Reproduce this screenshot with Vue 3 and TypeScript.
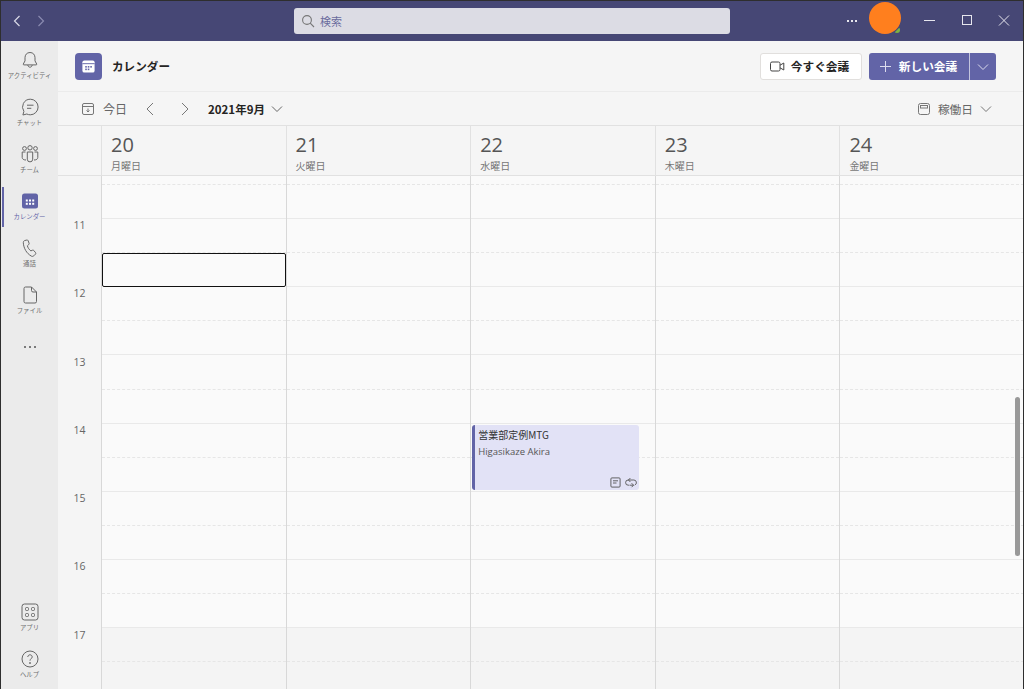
<script setup lang="ts">
const days = [
  { n: 20, w: '月曜日' },
  { n: 21, w: '火曜日' },
  { n: 22, w: '水曜日' },
  { n: 23, w: '木曜日' },
  { n: 24, w: '金曜日' },
]
const hours = [11, 12, 13, 14, 15, 16, 17]
// half-hour slots: index 0 is the clipped remainder above the 11:00 line
const slots = Array.from({ length: 16 }, (_, i) => i)
</script>

<template>
  <div class="app">
    <header class="topbar">
      <div class="nav">
        <svg width="12" height="14" viewBox="0 0 12 14" fill="none" stroke="#d8d8e6" stroke-width="1.2"><path d="M8.5 2 3.5 7l5 5" /></svg>
        <svg width="12" height="14" viewBox="0 0 12 14" fill="none" stroke="#8b8bb0" stroke-width="1.2"><path d="M3.5 2l5 5-5 5" /></svg>
      </div>
      <div class="search">
        <svg width="14" height="14" viewBox="0 0 14 14" fill="none" stroke="#777" stroke-width="1.1"><circle cx="6" cy="6" r="4.4" /><path d="M9.2 9.2 13 13" /></svg>
        <span>検索</span>
      </div>
      <div class="top-right">
        <span class="dots"><i></i><i></i><i></i></span>
        <div class="avatar"><b></b></div>
        <div class="win">
          <svg width="12" height="12" viewBox="0 0 12 12" fill="none" stroke="#e6e6ee" stroke-width="1"><path d="M0 5.500h11" /></svg>
          <svg width="12" height="12" viewBox="0 0 12 12" fill="none" stroke="#e6e6ee" stroke-width="1"><rect x="1.500" y=".5" width="9" height="9" /></svg>
          <svg width="12" height="12" viewBox="0 0 12 12" fill="none" stroke="#e6e6ee" stroke-width="1"><path d="M1 .5l10 10M11 .5 1 10.500" /></svg>
        </div>
      </div>
    </header>

    <div class="body">
      <nav class="rail">
        <div class="rail-group">
          <div class="rail-item">
            <svg width="20" height="20" viewBox="0 0 20 20" fill="none" stroke="#666" stroke-width="1"><path d="M10 2.500c-3.300 0-5 2.500-5 5.200v3.200L3.300 14c-.2.500 0 .9.600.9h12.200c.6 0 .8-.4.6-.9L15 10.900V7.700c0-2.700-1.700-5.200-5-5.200Z" /><path d="M7.800 15c.2 1.400 1.100 2.200 2.200 2.200s2-.8 2.200-2.200" /></svg>
            <span>アクティビティ</span>
          </div>
          <div class="rail-item">
            <svg width="20" height="20" viewBox="0 0 20 20" fill="none" stroke="#666" stroke-width="1"><path d="M10.300 2.200a7.800 7.800 0 0 1 0 15.600c-1.300 0-2.500-.3-3.500-.8l-3.900 1 1-3.600a7.800 7.800 0 0 1 6.400-12.200Z" /><path d="M7 8.200h6.500M7 11.300h4.300" /></svg>
            <span>チャット</span>
          </div>
          <div class="rail-item">
            <svg width="20" height="20" viewBox="0 0 20 20" fill="none" stroke="#666" stroke-width="1"><circle cx="4.500" cy="4.500" r="1.900" /><circle cx="10" cy="3.800" r="2.200" /><circle cx="15.500" cy="4.500" r="1.900" /><path d="M7.300 8h5.400v7.200a2.700 2.700 0 0 1-5.400 0Z" /><path d="M5.500 8H2.200v5.400c0 1.500 1.200 2.600 3.800 2.600M14.500 8h3.300v5.400c0 1.500-1.200 2.600-3.800 2.600" /></svg>
            <span>チーム</span>
          </div>
          <div class="rail-item active">
            <svg width="20" height="20" viewBox="0 0 20 20"><rect x="2" y="2.500" width="16" height="15" rx="2.500" fill="#6264a7" /><g fill="#fff"><rect x="5.800" y="8.500" width="2" height="2" /><rect x="9" y="8.500" width="2" height="2" /><rect x="12.200" y="8.500" width="2" height="2" /><rect x="5.800" y="11.800" width="2" height="2" /><rect x="9" y="11.800" width="2" height="2" /><rect x="12.200" y="11.800" width="2" height="2" /></g></svg>
            <span>カレンダー</span>
          </div>
          <div class="rail-item">
            <svg width="20" height="20" viewBox="0 0 20 20" fill="none" stroke="#666" stroke-width="1"><path d="M4.500 2.600 6.900 2c.5-.1 1 .1 1.200.6l1 2.700c.2.500 0 1-.4 1.300L7.400 7.800c.5 2 1.700 3.800 3.500 5.100l1.600-.7c.5-.2 1-.1 1.300.3l1.800 2.200c.3.400.3 1-.1 1.400l-1.700 1.700c-.7.700-1.700.8-2.500.3C6.600 15.300 3.700 10.500 3.300 4.700c0-1 .4-1.800 1.200-2.100Z" /></svg>
            <span>通話</span>
          </div>
          <div class="rail-item">
            <svg width="20" height="20" viewBox="0 0 20 20" fill="none" stroke="#666" stroke-width="1"><path d="M5.500 2h6l5 5v9.500a1.500 1.500 0 0 1-1.500 1.500H5.500A1.500 1.500 0 0 1 4 16.500v-13A1.500 1.500 0 0 1 5.500 2Z" /><path d="M11.500 2v3.500A1.500 1.500 0 0 0 13 7h3.500" /></svg>
            <span>ファイル</span>
          </div>
          <div class="rail-more"><i></i><i></i><i></i></div>
        </div>
        <div class="rail-group bottom">
          <div class="rail-item">
            <svg width="20" height="20" viewBox="0 0 20 20" fill="none" stroke="#666" stroke-width="1"><rect x="2" y="2" width="16" height="16" rx="2.500" /><rect x="5.500" y="5.500" width="3" height="3" rx="1" /><rect x="11.500" y="5.500" width="3" height="3" rx="1" /><rect x="5.500" y="11.500" width="3" height="3" rx="1" /><rect x="11.500" y="11.500" width="3" height="3" rx="1" /></svg>
            <span>アプリ</span>
          </div>
          <div class="rail-item">
            <svg width="20" height="20" viewBox="0 0 20 20" fill="none" stroke="#666" stroke-width="1"><circle cx="10" cy="10" r="8" /><path d="M7.800 8c0-1.300 1-2.200 2.200-2.200s2.200.9 2.200 2.100c0 1.800-2.200 1.800-2.200 3.800" /><circle cx="10" cy="14" r=".5" fill="#666" /></svg>
            <span>ヘルプ</span>
          </div>
        </div>
      </nav>

      <main class="main">
        <section class="head">
          <div class="app-icon">
            <svg width="15" height="15" viewBox="0 0 16 16"><rect x="1.500" y="1.500" width="13" height="13" rx="2" fill="#fff" /><rect x="1.500" y="4.500" width="13" height="1" fill="#6264a7" /><g fill="#6264a7"><rect x="4.500" y="7.500" width="1.700" height="1.700" /><rect x="7.200" y="7.500" width="1.700" height="1.700" /><rect x="9.900" y="7.500" width="1.700" height="1.700" /><rect x="4.500" y="10.200" width="1.700" height="1.700" /><rect x="7.200" y="10.200" width="1.700" height="1.700" /></g></svg>
          </div>
          <h1>カレンダー</h1>
          <div class="head-actions">
            <button class="btn-now">
              <svg width="15" height="13" viewBox="0 0 15 13" fill="none" stroke="#444" stroke-width="1"><rect x=".5" y="2" width="9.500" height="9" rx="1.500" /><path d="M10 5.200l3.800-2.200v7L10 7.800" /></svg>
              <span>今すぐ会議</span>
            </button>
            <div class="btn-new">
              <div class="btn-new-main">
                <svg width="13" height="13" viewBox="0 0 13 13" fill="none" stroke="#dcdcee" stroke-width="1"><path d="M6.500 1v11M1 6.500h11" /></svg>
                <span>新しい会議</span>
              </div>
              <div class="btn-new-arrow">
                <svg width="12" height="8" viewBox="0 0 12 8" fill="none" stroke="#dcdcee" stroke-width="1"><path d="M1 1.500l5 5 5-5" /></svg>
              </div>
            </div>
          </div>
        </section>

        <section class="toolbar">
          <svg class="today-icon" width="12" height="12" viewBox="0 0 12 12" fill="none" stroke="#777" stroke-width="1"><rect x=".5" y=".5" width="11" height="11" rx="1.500" /><path d="M.5 3.500h11M6 5.500v3.500M4.500 7.500 6 9l1.500-1.500" /></svg>
          <span class="today">今日</span>
          <svg class="prev" width="10" height="14" viewBox="0 0 10 14" fill="none" stroke="#777" stroke-width="1"><path d="M8 1 2 7l6 6" /></svg>
          <svg class="next" width="10" height="14" viewBox="0 0 10 14" fill="none" stroke="#777" stroke-width="1"><path d="M2 1l6 6-6 6" /></svg>
          <span class="month">2021年9月</span>
          <svg class="chev" width="12" height="8" viewBox="0 0 12 8" fill="none" stroke="#666" stroke-width="1"><path d="M1 1.500l5 5 5-5" /></svg>
          <div class="view">
            <svg width="12" height="12" viewBox="0 0 12 12" fill="none" stroke="#777" stroke-width="1"><rect x=".5" y=".5" width="11" height="11" rx="2" /><rect x="2.500" y="2.500" width="7" height="2.500" /></svg>
            <span>稼働日</span>
            <svg width="12" height="8" viewBox="0 0 12 8" fill="none" stroke="#777" stroke-width="1"><path d="M1 1.500l5 5 5-5" /></svg>
          </div>
        </section>

        <section class="day-head">
          <div class="gutter-head"></div>
          <div v-for="d in days" :key="d.n" class="day">
            <div class="num">{{ d.n }}</div>
            <div class="wd">{{ d.w }}</div>
          </div>
        </section>

        <section class="grid">
          <div class="gutter">
            <div class="gutter-top"></div>
            <div v-for="h in hours" :key="h" class="hour">{{ h }}</div>
          </div>
          <div v-for="(d, di) in days" :key="d.n" class="col">
            <div
              v-for="s in slots"
              :key="s"
              class="slot"
              :class="{
                first: s === 0,
                solid: s % 2 === 1,
                off: s >= 14,
                selected: di === 0 && s === 3,
              }"
            ></div>
            <div v-if="di === 2" class="event">
              <div class="ev-title">営業部定例MTG</div>
              <div class="ev-org">Higasikaze Akira</div>
              <div class="ev-icons">
                <svg width="11" height="11" viewBox="0 0 11 11" fill="none" stroke="#555" stroke-width=".9"><rect x=".9" y=".9" width="9.200" height="9.200" rx="1" /><path d="M3 3.800h5M3 6h3.500" /></svg>
                <svg width="12" height="11" viewBox="0 0 12 11" fill="none" stroke="#555" stroke-width=".9"><path d="M4 8.200H3.200A2.600 2.600 0 0 1 3.200 3h5.600A2.600 2.600 0 0 1 9.800 8" /><path d="M5.400 1 3.400 3l2 2" /><path d="M4.500 8.200h4" /><path d="M6.600 6.200l2 2-2 2" /></svg>
              </div>
            </div>
          </div>
          <div class="scrollbar"></div>
        </section>
      </main>
    </div>
  </div>
</template>

<style>
html, body { margin: 0; padding: 0; overflow: hidden; }
</style>

<style scoped>
.app {
  width: 1024px;
  height: 689px;
  box-sizing: border-box;
  border: 1px solid #2e2e2e;
  border-width: 1px 1px 0 1px;
  display: flex;
  flex-direction: column;
  overflow: hidden;
  font-family: "Open Sans", "Noto Sans CJK JP", sans-serif;
  color: #252423;
  background: #f5f5f5;
}
.topbar {
  height: 40px;
  flex: none;
  background: #464775;
  display: flex;
  align-items: center;
}
.nav {
  width: 293px;
  flex: none;
  box-sizing: border-box;
  padding: 0 0 0 10px;
  display: flex;
  gap: 12px;
}
.search {
  width: 436px;
  height: 26px;
  flex: none;
  box-sizing: border-box;
  background: #dcdce4;
  border-radius: 3px;
  display: flex;
  align-items: center;
  gap: 5px;
  padding-left: 7px;
  font-size: 11px;
  color: #6a6c9e;
}
.top-right {
  flex: 1;
  display: flex;
  align-items: center;
  padding-left: 117px;
}
.dots { display: flex; gap: 2px; width: 22px; }
.dots i { width: 2px; height: 2px; background: #e6e6ee; }
.avatar {
  width: 32px;
  height: 32px;
  margin: -6px 0 0 0;
  border-radius: 50%;
  background: #ff7f1e;
  position: relative;
}
.avatar b {
  position: absolute;
  right: 1px;
  bottom: 1px;
  width: 6px;
  height: 6px;
  border-radius: 50%;
  background: #7db343;
  clip-path: polygon(100% 0, 100% 100%, 0 100%);
}
.win {
  margin-left: 23px;
  display: flex;
  gap: 25px;
}
.body { flex: 1; min-height: 0; display: flex; }
.rail {
  width: 57px;
  flex: none;
  background: #ebebeb;
  display: flex;
  flex-direction: column;
  justify-content: space-between;
}
.rail-group { padding-top: 2px; }
.rail-group.bottom { padding-bottom: 0; }
.rail-item {
  height: 47px;
  box-sizing: border-box;
  padding-top: 7px;
  display: flex;
  flex-direction: column;
  align-items: center;
  position: relative;
  font-size: 6.400px;
  line-height: 11px;
  color: #6e6e6e;
}
.rail-item span { white-space: nowrap; }
.rail-item.active { color: #6264a7; }
.rail-item.active::before {
  content: "";
  position: absolute;
  left: 1px;
  top: 3px;
  width: 2px;
  height: 40px;
  background: #6264a7;
}
.rail-more {
  height: 34px;
  display: flex;
  justify-content: center;
  align-items: center;
  gap: 3px;
  padding-top: 5px;
}
.rail-more i { width: 2px; height: 2px; border-radius: 50%; background: #555; }
.main { flex: 1; min-width: 0; display: flex; flex-direction: column; }
.head {
  height: 51px;
  flex: none;
  box-sizing: border-box;
  border-bottom: 1px solid #ebebeb;
  display: flex;
  align-items: center;
  padding: 1px 27px 0 17px;
}
.app-icon {
  width: 27px;
  height: 27px;
  border-radius: 4px;
  background: #6264a7;
  display: flex;
  align-items: center;
  justify-content: center;
}
h1 {
  margin: -1px 0 0 10px;
  font-size: 11.600px;
  font-weight: 700;
  font-family: "Noto Sans CJK JP", sans-serif;
}
.head-actions { margin-left: auto; display: flex; gap: 7px; }
.btn-now {
  width: 102px;
  height: 27px;
  box-sizing: border-box;
  background: #fff;
  border: 1px solid #e1dfdd;
  border-radius: 3px;
  padding: 0 3px 0 0;
  display: flex;
  align-items: center;
  justify-content: center;
  gap: 6px;
  font: 700 11.700px "Noto Sans CJK JP", sans-serif;
  color: #252423;
}
.btn-now span, .btn-new-main span { margin-top: -2px; }
.btn-new {
  height: 27px;
  display: flex;
  background: #6264a7;
  border-radius: 3px;
  color: #fff;
  font: 700 11.700px "Noto Sans CJK JP", sans-serif;
}
.btn-new-main {
  width: 101px;
  box-sizing: border-box;
  padding-right: 2px;
  border-right: 1px solid #c4c5de;
  display: flex;
  align-items: center;
  justify-content: center;
  gap: 7px;
}
.btn-new-arrow {
  width: 26px;
  display: flex;
  align-items: center;
  justify-content: center;
}
.toolbar {
  height: 33px;
  flex: none;
  display: flex;
  align-items: center;
  padding: 0 31px 0 24px;
  font-size: 12px;
  color: #666;
  font-family: "Noto Sans CJK JP", sans-serif;
}
.today { margin-left: 9px; }
.prev { margin-left: 18px; }
.next { margin-left: 25px; }
.month { margin-left: 18px; font-weight: 700; color: #252423; font-size: 11.500px; }
.chev { margin-left: 6px; }
.view { margin-left: auto; display: flex; align-items: center; gap: 8px; }
.view span { margin-right: -1px; font-size: 11.700px; }
.day-head {
  height: 51px;
  flex: none;
  box-sizing: border-box;
  display: grid;
  grid-template-columns: 43px repeat(5, 184.600px);
  border-top: 1px solid #e1e1e1;
  border-bottom: 1px solid #e1e1e1;
}
.day {
  border-left: 1px solid #e1e1e1;
  box-sizing: border-box;
  padding: 5px 0 0 9px;
}
.num { font-size: 20px; line-height: 27px; color: #555; }
.wd { font-size: 10px; line-height: 13px; margin-top: 1px; color: #777; font-family: "Noto Sans CJK JP", sans-serif; }
.grid {
  flex: 1;
  min-height: 0;
  display: grid;
  grid-template-columns: 43px repeat(5, 184.600px);
  position: relative;
  overflow: hidden;
}
.gutter { color: #666; font-size: 10.500px; }
.gutter-top { height: 42px; }
.hour {
  height: 68.250px;
  box-sizing: border-box;
  text-align: center;
  line-height: 14px;
}
.col {
  position: relative;
  border-left: 1px solid #d8d8d8;
  background: #fafafa;
}
.slot {
  height: 34.100px;
  box-sizing: border-box;
  border-bottom: 1px dashed #e6e6e6;
}
.slot.first { height: 9px; }
.slot.solid { border-bottom: 1px solid #e9e9e9; }
.slot.off { background: #f4f4f4; }
.slot.selected {
  border: 1px solid #111;
  border-radius: 2px;
}
.event {
  position: absolute;
  left: 1px;
  right: 16px;
  top: 249px;
  height: 65px;
  box-sizing: border-box;
  background: #e2e2f6;
  border-left: 3px solid #6264a7;
  border-radius: 3px;
  padding: 2px 3px;
  overflow: hidden;
}
.ev-title {
  font-size: 10px;
  line-height: 15px;
  color: #333;
  font-family: "Noto Sans CJK JP", sans-serif;
}
.ev-org { font-size: 9.500px; line-height: 14px; margin-top: 3px; color: #555; }
.ev-icons {
  position: absolute;
  right: 2px;
  bottom: 2px;
  display: flex;
  gap: 4px;
  align-items: center;
}
.scrollbar {
  position: absolute;
  right: 3px;
  top: 221px;
  width: 5px;
  height: 159px;
  border-radius: 3px;
  background: #999;
}
</style>
